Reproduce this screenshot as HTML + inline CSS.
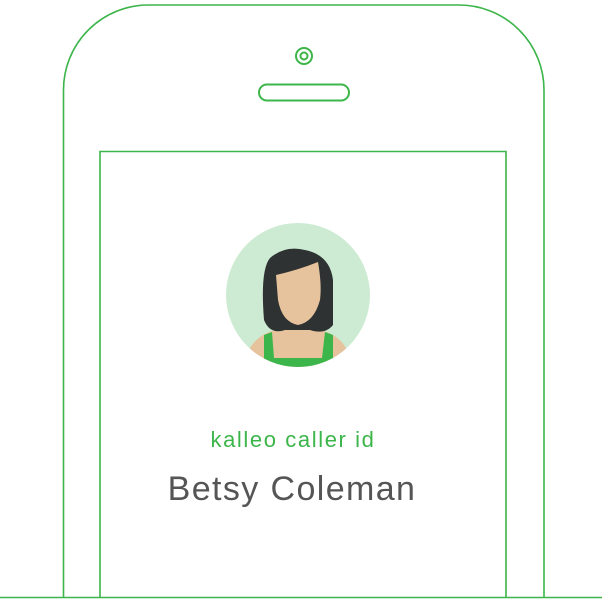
<!DOCTYPE html>
<html><head><style>
html,body{margin:0;padding:0;background:#fff;width:602px;height:600px;overflow:hidden;position:relative;font-family:"Liberation Sans",sans-serif}
.t1{position:absolute;left:0;width:586px;top:427px;text-align:center;color:#3cb54a;font-size:22px;letter-spacing:1.6px}
.t2{position:absolute;left:0;width:584px;top:470px;text-align:center;color:#555;font-size:34px;letter-spacing:1.4px}
</style></head><body>
<svg width="602" height="600" style="position:absolute;left:0;top:0">
<g fill="none" stroke="#3cb54a" stroke-width="1.6">
<path d="M63.5 598 V90 A85 85 0 0 1 148.5 5 H459 A85 85 0 0 1 544 90 V598"/>
<path d="M100 598 V151.5 H506 V598"/>
<line x1="0" y1="597.5" x2="602" y2="597.5"/>
<circle cx="304" cy="56" r="8" stroke-width="2"/>
<circle cx="304" cy="56" r="3.5" stroke-width="2"/>
<rect x="259" y="84.5" width="90" height="16" rx="8" stroke-width="2"/>
</g>
<defs><clipPath id="c"><circle cx="298" cy="295" r="72"/></clipPath></defs>
<circle cx="298" cy="295" r="72" fill="#cdebd2"/>
<g clip-path="url(#c)">
<path d="M244 370 Q246 338 275 330 L321 330 Q350 338 352 370 Z" fill="#e6c39d"/>
<path d="M264 335 L272 332 L274 358 L322 358 L325 332 L333 335 L333 372 L264 372 Z" fill="#3cb54a"/>
<path d="M264 320 Q260 270 270 258 Q285 245 305 250 Q330 255 333 280 L333 325 Q325 335 310 330 L285 330 Q270 335 264 320 Z" fill="#2e3232"/>
<path d="M276 275 Q298 270 318 262 Q322 285 320 300 Q314 322 298 325 Q282 322 278 300 Z" fill="#e6c39d"/>
</g>
</svg>
<div class="t1">kalleo caller id</div>
<div class="t2">Betsy Coleman</div>
</body></html>
